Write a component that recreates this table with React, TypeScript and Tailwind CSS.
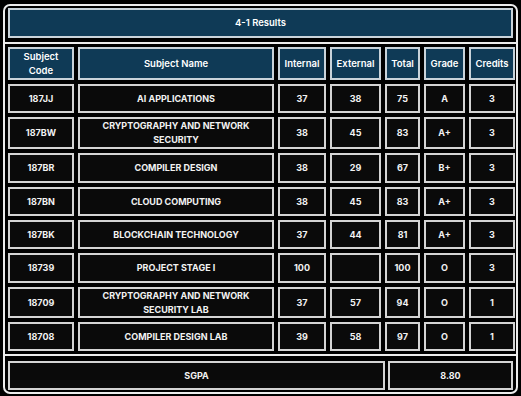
import React from "react";

interface Subject {
  code: string;
  name: string;
  internal: string;
  external: string;
  total: string;
  grade: string;
  credits: string;
}

const SUBJECTS: Subject[] = [
  { code: "187JJ", name: "AI APPLICATIONS", internal: "37", external: "38", total: "75", grade: "A", credits: "3" },
  { code: "187BW", name: "CRYPTOGRAPHY AND NETWORK SECURITY", internal: "38", external: "45", total: "83", grade: "A+", credits: "3" },
  { code: "187BR", name: "COMPILER DESIGN", internal: "38", external: "29", total: "67", grade: "B+", credits: "3" },
  { code: "187BN", name: "CLOUD COMPUTING", internal: "38", external: "45", total: "83", grade: "A+", credits: "3" },
  { code: "187BK", name: "BLOCKCHAIN TECHNOLOGY", internal: "37", external: "44", total: "81", grade: "A+", credits: "3" },
  { code: "18739", name: "PROJECT STAGE I", internal: "100", external: "", total: "100", grade: "O", credits: "3" },
  { code: "18709", name: "CRYPTOGRAPHY AND NETWORK SECURITY LAB", internal: "37", external: "57", total: "94", grade: "O", credits: "1" },
  { code: "18708", name: "COMPILER DESIGN LAB", internal: "39", external: "58", total: "97", grade: "O", credits: "1" },
];

const HEADERS = ["Subject Code", "Subject Name", "Internal", "External", "Total", "Grade", "Credits"];

function HeadCell({ children }: { children: React.ReactNode }) {
  return (
    <div className="flex items-center justify-center text-center border-2 border-[#c9d3da] bg-[#0f3a56] text-[9.5px] font-semibold leading-[14px] text-white px-2">
      {children}
    </div>
  );
}

function Cell({ children, wide }: { children: React.ReactNode; wide?: boolean }) {
  return (
    <div
      className={
        "flex items-center justify-center text-center border-2 border-[#d4d4d4] bg-[#0a0a0a] text-[9px] font-bold leading-[14px] text-[#f2f2f2] " +
        (wide ? "px-5" : "px-1")
      }
    >
      {children}
    </div>
  );
}

export default function App() {
  return (
    <div
      className="w-[521px] h-[396px] bg-black pt-[4px] px-[3px] pb-[2px]"
      style={{ fontFamily: "Inter, 'Noto Sans', sans-serif" }}
    >
      <div className="h-full flex flex-col border-2 border-[#ececec] rounded-[7px] overflow-hidden">
        {/* Title */}
        <div className="px-[3px] pt-[2px] pb-[4px]">
          <div className="h-[30px] flex items-center justify-center border-2 border-[#c9d3da] bg-[#0f3a56] text-[9.5px] font-semibold text-white">
            4-1 Results
          </div>
        </div>

        {/* Marks table */}
        <div className="border-t-2 border-[#ececec] px-[3px] pt-[3px] pb-[3px]">
          <div className="grid grid-cols-[66px_196px_48px_51px_35px_41px_46px] grid-rows-[33px_29px_32px_30px_29px_29px_30px_31px_29px] gap-[4px]">
            {HEADERS.map((h) => (
              <HeadCell key={h}>{h}</HeadCell>
            ))}
            {SUBJECTS.map((s) => (
              <React.Fragment key={s.code}>
                <Cell>{s.code}</Cell>
                <Cell wide>{s.name}</Cell>
                <Cell>{s.internal}</Cell>
                <Cell>{s.external}</Cell>
                <Cell>{s.total}</Cell>
                <Cell>{s.grade}</Cell>
                <Cell>{s.credits}</Cell>
              </React.Fragment>
            ))}
          </div>
        </div>

        {/* SGPA */}
        <div className="border-t-2 border-[#ececec] px-[3px] pt-[5px]">
          <div className="flex gap-[3px] h-[29px]">
            <div className="w-[377px] flex items-center justify-center border-2 border-[#d4d4d4] bg-[#0a0a0a] text-[9px] font-bold text-[#f2f2f2]">
              SGPA
            </div>
            <div className="flex-1 flex items-center justify-center border-2 border-[#d4d4d4] bg-[#0a0a0a] text-[9px] font-bold text-[#f2f2f2]">
              8.80
            </div>
          </div>
        </div>
      </div>
    </div>
  );
}
